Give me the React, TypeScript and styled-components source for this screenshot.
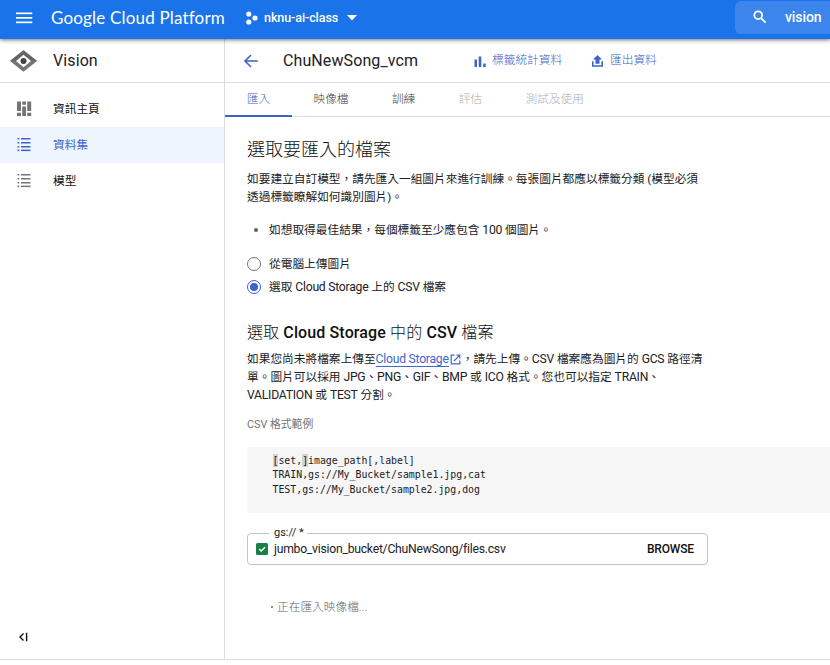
import React from "react";
import styled, { createGlobalStyle } from "styled-components";

const GlobalStyle = createGlobalStyle`
  * { box-sizing: border-box; }
  html, body { margin: 0; background: #fff; overflow: hidden; }
  body { font-family: Roboto, "Noto Sans CJK TC", sans-serif; font-size: 12px; color: #202124; }
  svg { display: block; flex: none; }
`;

const Page = styled.div`
  width: 830px;
  height: 665px;
  display: flex;
  flex-direction: column;
  overflow: hidden;
`;

const TopBar = styled.header`
  height: 39px;
  flex: none;
  display: flex;
  align-items: center;
  padding: 0 0 4px 16px;
  background: #1a73e8;
  color: #fff;
  box-shadow: 0 1px 4px rgba(0, 0, 0, 0.55);
  z-index: 1;
`;

const Brand = styled.div`
  width: 194px;
  margin-left: 18px;
  height: 35px;
  line-height: 35px;
  font-family: Lato, sans-serif;
  font-size: 17px;
  letter-spacing: 0.18px;
  white-space: nowrap;
`;

const Project = styled.div`
  display: flex;
  align-items: center;
  height: 35px;
  font-size: 12.5px;
  font-weight: 500;
  letter-spacing: -0.08px;
  flex: 1;
`;

const ProjectName = styled.span`
  width: 83px;
  margin-left: 6px;
  white-space: nowrap;
`;

const Search = styled.div`
  align-self: flex-start;
  display: flex;
  align-items: center;
  width: 95px;
  height: 33px;
  margin-top: 1px;
  padding: 0 0 1px 18px;
  gap: 18px;
  border-radius: 6px 0 0 6px;
  background: #3b85ec;
  font-size: 14px;
  font-weight: 500;
  letter-spacing: -0.1px;
`;

const Body = styled.div`
  flex: none;
  height: 621px;
  display: flex;
  border-bottom: 1px solid #dadce0;
`;

const Sidebar = styled.aside`
  width: 225px;
  flex: none;
  display: flex;
  flex-direction: column;
  border-right: 1px solid #dadce0;
`;

const ProductHeader = styled.div`
  height: 44px;
  display: flex;
  align-items: center;
  gap: 16px;
  padding-left: 10px;
  border-bottom: 1px solid #dadce0;
  font-size: 16px;
  letter-spacing: 0.1px;
`;

const Nav = styled.nav`
  padding-top: 8px;
  flex: 1;
`;

const NavItem = styled.div<{ $active?: boolean }>`
  height: 36px;
  display: flex;
  align-items: center;
  gap: 21px;
  padding-left: 16px;
  color: ${(p) => (p.$active ? "#3c63c8" : "#111")};
  background: ${(p) => (p.$active ? "#eef5fe" : "transparent")};
  svg { color: ${(p) => (p.$active ? "#3c63c8" : "#757575")}; }
`;

const NavLabel = styled.span`
  height: 36px;
  line-height: 36px;
  font-size: 11.7px;
`;

const Collapse = styled.div`
  padding: 0 0 17px 18px;
`;

const Main = styled.main`
  flex: 1;
  min-width: 0;
  display: flex;
  flex-direction: column;
`;

const TitleBar = styled.div`
  height: 44px;
  flex: none;
  display: flex;
  align-items: center;
  padding-left: 18px;
  border-bottom: 1px solid #dadce0;
`;

const Title = styled.h1`
  width: 191px;
  margin: 0 0 0 24px;
  font-size: 16px;
  font-weight: 400;
  letter-spacing: 0.1px;
  white-space: nowrap;
`;

const Action = styled.div<{ $width: number; $gap: number }>`
  width: ${(p) => p.$width}px;
  display: flex;
  align-items: center;
  gap: ${(p) => p.$gap}px;
  color: #3c63c8;
`;

const ActionLabel = styled.span`
  height: 20px;
  line-height: 19px;
  font-size: 11.7px;
  font-weight: 300;
  white-space: nowrap;
`;

const Tabs = styled.div`
  height: 34px;
  flex: none;
  display: flex;
  border-bottom: 1px solid #dadce0;
`;

const Tab = styled.div<{ $state?: "active" | "disabled" }>`
  height: 34px;
  padding: 0 21.7px;
  line-height: 32px;
  font-size: 11.7px;
  font-weight: 300;
  white-space: nowrap;
  color: ${(p) => (p.$state === "active" ? "#3c63c8" : p.$state === "disabled" ? "#b0b0b0" : "#3c4043")};
  border-bottom: ${(p) => (p.$state === "active" ? "2px solid #3c63c8" : "0")};
`;

const Content = styled.div`
  padding: 19px 0 0 22px;
  display: flex;
  flex-direction: column;
`;

const Heading = styled.h2<{ $size: number; $gap: number }>`
  margin: ${(p) => p.$gap}px 0 0;
  height: 26px;
  line-height: 27px;
  font-size: ${(p) => p.$size}px;
  font-weight: ${(p) => (p.$size > 17 ? 300 : 500)};
  letter-spacing: ${(p) => (p.$size > 17 ? 0 : 0.12)}px;
  color: #111;
  white-space: nowrap;
`;

const Cjk = styled.span`
  font-weight: 300;
`;

const Paragraph = styled.div<{ $gap: number }>`
  margin-top: ${(p) => p.$gap}px;
`;

const Line = styled.div<{ $tone?: string; $size?: number; $light?: boolean }>`
  height: 18px;
  line-height: 18px;
  font-size: ${(p) => p.$size ?? 11.7}px;
  font-weight: ${(p) => (p.$light ? 300 : 400)};
  color: ${(p) => p.$tone ?? "#202124"};
  white-space: nowrap;
`;

const Latin = styled.span`
  font-size: 12.2px;
  letter-spacing: -0.25px;
`;

const BulletRow = styled.div`
  display: flex;
  align-items: center;
  gap: 11px;
  margin-top: 15px;
  padding-left: 7px;
`;

const Dot = styled.span<{ $size: number }>`
  width: ${(p) => p.$size}px;
  height: ${(p) => p.$size}px;
  border-radius: 50%;
  background: #5f6368;
`;

const Option = styled.label`
  display: flex;
  align-items: center;
  gap: 8px;
  height: 23px;
`;

const Options = styled.div`
  margin-top: 13px;
`;

const Radio = styled.span<{ $checked?: boolean }>`
  width: 14px;
  height: 14px;
  border-radius: 50%;
  border: 1.5px solid ${(p) => (p.$checked ? "#3c63c8" : "#757575")};
  display: flex;
  align-items: center;
  justify-content: center;
  &::after {
    content: "";
    width: 8px;
    height: 8px;
    border-radius: 50%;
    background: ${(p) => (p.$checked ? "#3c63c8" : "transparent")};
  }
`;

const Link = styled.a`
  display: inline-block;
  height: 17px;
  line-height: 18px;
  vertical-align: top;
  color: #4267c8;
  border-bottom: 1px solid #4267c8;
`;

const LinkIcon = styled.span`
  display: inline-block;
  width: 13px;
  padding: 4px 0 0 1px;
  height: 18px;
  vertical-align: top;
`;

const CodeBlock = styled.div`
  height: 66px;
  margin-top: 13px;
  padding: 6px 0 0 25.5px;
  border-radius: 2px 0 0 2px;
  background: #f6f6f6;
`;

const CodeLine = styled.div`
  display: flex;
  align-items: center;
  height: 14.5px;
  line-height: 13px;
  font-family: "DejaVu Sans Mono", monospace;
  font-size: 9.85px;
  color: #202124;
  white-space: pre;
`;

const Bracket = styled.span`
  background: #d3d3cf;
`;

const Field = styled.div`
  position: relative;
  display: flex;
  align-items: center;
  width: 461px;
  height: 32px;
  margin-top: 20px;
  padding: 0 13px 0 8px;
  gap: 6px;
  border: 1px solid #c4c4c4;
  border-radius: 4px;
`;

const FieldLabel = styled.span`
  position: absolute;
  top: -9px;
  left: 21px;
  padding: 0 3px 0 5px;
  height: 14px;
  line-height: 15px;
  font-size: 11px;
  background: #fff;
`;

const FieldValue = styled.span`
  flex: 1;
  font-size: 12.2px;
  letter-spacing: -0.25px;
  white-space: nowrap;
`;

const Browse = styled.button`
  border: 0;
  padding: 0;
  background: none;
  font: 500 12px Roboto, sans-serif;
  letter-spacing: -0.15px;
  color: #111;
`;

const Status = styled.div`
  display: flex;
  align-items: center;
  gap: 4px;
  margin-top: 33px;
  padding-left: 24px;
`;

const ListIcon = () => (
  <svg width="16" height="16" viewBox="0 0 16 16" fill="currentColor">
    {[1, 5, 9, 12.6].map((y) => (
      <React.Fragment key={y}>
        <rect x="1.5" y={y} width="1.8" height="1.5" />
        <rect x="5" y={y} width="9.5" height="1.5" />
      </React.Fragment>
    ))}
  </svg>
);

export default function App() {
  return (
    <Page>
      <GlobalStyle />
      <TopBar>
        <svg width="17" height="12" viewBox="0 0 17 12" fill="#fff">
          <rect y="0.5" width="16.3" height="1.7" />
          <rect y="5" width="16.3" height="1.7" />
          <rect y="9.5" width="16.3" height="1.7" />
        </svg>
        <Brand>Google Cloud Platform</Brand>
        <Project>
          <svg width="13" height="14" viewBox="0 0 13 14" fill="#fff">
            <circle cx="3.8" cy="3" r="2.6" />
            <circle cx="10" cy="7" r="2.6" />
            <circle cx="3.8" cy="11" r="2.6" />
          </svg>
          <ProjectName>nknu-ai-class</ProjectName>
          <svg width="10" height="6" viewBox="0 0 10 6" fill="#fff">
            <path d="M0 0h10L5 5.5z" />
          </svg>
        </Project>
        <Search>
          <svg width="14" height="14" viewBox="0 0 14 14" fill="none" stroke="#fff" strokeWidth="1.8">
            <circle cx="5.2" cy="5.2" r="3.9" />
            <path d="M8 8l4.6 4.6" />
          </svg>
          vision
        </Search>
      </TopBar>
      <Body>
        <Sidebar>
          <ProductHeader>
            <svg width="27" height="22" viewBox="0 0 27 22">
              <path d="M13.5 0.3L27 11 13.5 21.7 0 11z" fill="#757575" />
              <path d="M13.5 0.3L27 11H21L13.5 5 6 11H0z" fill="#666" />
              <path d="M13.5 4.8L21 11l-7.5 6.2L6 11z" fill="#fff" />
              <circle cx="13.5" cy="11" r="3" fill="#424242" />
            </svg>
            Vision
          </ProductHeader>
          <Nav>
            <NavItem>
              <svg width="16" height="16" viewBox="0 0 16 16" fill="currentColor">
                <path d="M1 0.5h4V10H1zM1 11.8h4V15H1zM6.2 0.5H10v3.2H6.200zM6.200 5.500H10V15H6.200zM11.200 0.500h4V10h-4zM11.200 11.800h4V15h-4z" />
              </svg>
              <NavLabel>資訊主頁</NavLabel>
            </NavItem>
            <NavItem $active>
              <ListIcon />
              <NavLabel>資料集</NavLabel>
            </NavItem>
            <NavItem>
              <ListIcon />
              <NavLabel>模型</NavLabel>
            </NavItem>
          </Nav>
          <Collapse>
            <svg width="10" height="10" viewBox="0 0 10 10" fill="none" stroke="#111" strokeWidth="1.4">
              <path d="M5.500 1.500L2 5l3.500 3.500M8.600 0.800v8.400" />
            </svg>
          </Collapse>
        </Sidebar>
        <Main>
          <TitleBar>
            <svg width="16" height="16" viewBox="0 0 16 16" fill="none" stroke="#3c63c8" strokeWidth="1.6">
              <path d="M14.8 8H2M8 2L2 8l6 6" />
            </svg>
            <Title>ChuNewSong_vcm</Title>
            <Action $width={117} $gap={6}>
              <svg width="12" height="12" viewBox="0 0 12 12" fill="#3c63c8">
                <path d="M0.500 4.500h2.500V12H0.500zM4.700 1.500h2.600V12H4.700zM9.200 8.500h2.500V12H9.200z" />
              </svg>
              <ActionLabel>標籤統計資料</ActionLabel>
            </Action>
            <Action $width={80} $gap={6}>
              <svg width="13" height="12" viewBox="0 0 13 12" fill="#3c63c8">
                <path d="M6.500 0L11 4.500H8.500V8.800h-4V4.500H2zM1 6.300h1.600v4h7.800v-4H12v5.500H1z" />
              </svg>
              <ActionLabel>匯出資料</ActionLabel>
            </Action>
          </TitleBar>
          <Tabs>
            <Tab $state="active">匯入</Tab>
            <Tab>映像檔</Tab>
            <Tab>訓練</Tab>
            <Tab $state="disabled">評估</Tab>
            <Tab $state="disabled">測試及使用</Tab>
          </Tabs>
          <Content>
            <Heading $size={18} $gap={0}>選取要匯入的檔案</Heading>
            <Paragraph $gap={8}>
              <Line>如要建立自訂模型，請先匯入一組圖片來進行訓練。每張圖片都應以標籤分類 (模型必須</Line>
              <Line>透過標籤瞭解如何識別圖片)。</Line>
            </Paragraph>
            <BulletRow>
              <Dot $size={4} />
              <Line>如想取得最佳結果，每個標籤至少應包含 <Latin>100</Latin> 個圖片。</Line>
            </BulletRow>
            <Options>
              <Option>
                <Radio />
                <Line>從電腦上傳圖片</Line>
              </Option>
              <Option>
                <Radio $checked />
                <Line>選取 <Latin>Cloud Storage</Latin> 上的 <Latin>CSV</Latin> 檔案</Line>
              </Option>
            </Options>
            <Heading $size={16} $gap={21}>
              <Cjk>選取</Cjk> Cloud Storage <Cjk>中的</Cjk> CSV <Cjk>檔案</Cjk>
            </Heading>
            <Paragraph $gap={5}>
              <Line>
                如果您尚未將檔案上傳至<Link><Latin>Cloud Storage</Latin></Link>
                <LinkIcon>
                  <svg width="11" height="11" viewBox="0 0 11 11" fill="none" stroke="#4267c8" strokeWidth="1.2">
                    <path d="M4.500 1.200H1.200v8.600h8.600V6.500M6.500 1.200h3.300v3.300M9.800 1.200L4 7" />
                  </svg>
                </LinkIcon>
                ，請先上傳。<Latin>CSV</Latin> 檔案應為圖片的 <Latin>GCS</Latin> 路徑清
              </Line>
              <Line>
                單。圖片可以採用 <Latin>JPG</Latin>、<Latin>PNG</Latin>、<Latin>GIF</Latin>、<Latin>BMP</Latin> 或{" "}
                <Latin>ICO</Latin> 格式。您也可以指定 <Latin>TRAIN</Latin>、
              </Line>
              <Line><Latin>VALIDATION</Latin> 或 <Latin>TEST</Latin> 分割。</Line>
            </Paragraph>
            <Paragraph $gap={12}>
              <Line $tone="#757575" $size={10.8}>CSV 格式範例</Line>
            </Paragraph>
            <CodeBlock>
              <CodeLine>
                <Bracket>[</Bracket>
                <span>set,</span>
                <Bracket>]</Bracket>
                <span>image_path[,label]</span>
              </CodeLine>
              <CodeLine>TRAIN,gs://My_Bucket/sample1.jpg,cat</CodeLine>
              <CodeLine>TEST,gs://My_Bucket/sample2.jpg,dog</CodeLine>
            </CodeBlock>
            <Field>
              <FieldLabel>gs:// *</FieldLabel>
              <svg width="12" height="12" viewBox="0 0 12 12">
                <rect width="12" height="12" rx="1.5" fill="#188045" />
                <path d="M3.200 6l2 2L9 4.300" fill="none" stroke="#fff" strokeWidth="1.5" />
              </svg>
              <FieldValue>jumbo_vision_bucket/ChuNewSong/files.csv</FieldValue>
              <Browse>BROWSE</Browse>
            </Field>
            <Status>
              <Dot $size={2} />
              <Line $light $tone="#5f6368">正在匯入映像檔...</Line>
            </Status>
          </Content>
        </Main>
      </Body>
    </Page>
  );
}
